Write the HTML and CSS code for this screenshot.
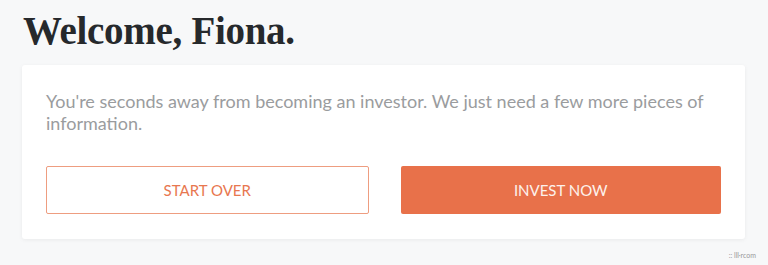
FILE: index.html
```html
<!DOCTYPE html>
<html lang="en">
<head>
  <meta charset="UTF-8">
  <meta name="viewport" content="width=device-width, initial-scale=1.0">
  <title>Welcome</title>
  <link rel="stylesheet" href="styles.css">
</head>
<body>

  <!-- Greeting -->
  <h1 class="welcome">Welcome, Fiona.</h1>

  <!-- Onboarding card -->
  <div class="card">
    <p class="card-text">You're seconds away from becoming an investor. We just need a few more pieces of information.</p>
    <div class="actions">
      <a href="#" class="btn btn-outline">START OVER</a>
      <a href="#" class="btn btn-solid">INVEST NOW</a>
    </div>
  </div>

  <div class="footer-mark">:: lll·rcom</div>

</body>
</html>
```

FILE: styles.css
```css
* {
  margin: 0;
  padding: 0;
  box-sizing: border-box;
}

body {
  font-family: Lato, "Noto Sans", Arial, sans-serif;
  background-color: #f7f8f9;
  padding: 10px 23px 0 22px;
  height: 265px;
  overflow: hidden;
}

.welcome {
  font-family: "Liberation Serif", serif;
  font-weight: bold;
  font-size: 39px;
  line-height: 42px;
  color: #26292c;
  letter-spacing: -0.3px;
  margin-left: 1px;
  margin-bottom: 13px;
}

.card {
  background-color: #fff;
  border-radius: 3px;
  box-shadow: 0 1px 4px rgba(0,0,0,0.06);
  padding: 25px 24px 25px 24px;
}

.card-text {
  font-size: 18px;
  line-height: 22px;
  color: #9a9c9e;
}

.actions {
  display: flex;
  gap: 32px;
  margin-top: 32px;
}

.btn {
  flex: 1;
  height: 48px;
  display: flex;
  align-items: center;
  justify-content: center;
  border-radius: 2px;
  text-decoration: none;
  font-size: 15px;
  letter-spacing: 0;
}

.btn-outline {
  border: 1px solid #ee9d80;
  color: #e8774f;
  background-color: #fff;
}

.btn-solid {
  background-color: #e8714a;
  color: #fdf1ec;
}

.footer-mark {
  text-align: right;
  font-size: 7px;
  color: #999;
  margin-top: 12px;
  margin-right: -11px;
}
```
